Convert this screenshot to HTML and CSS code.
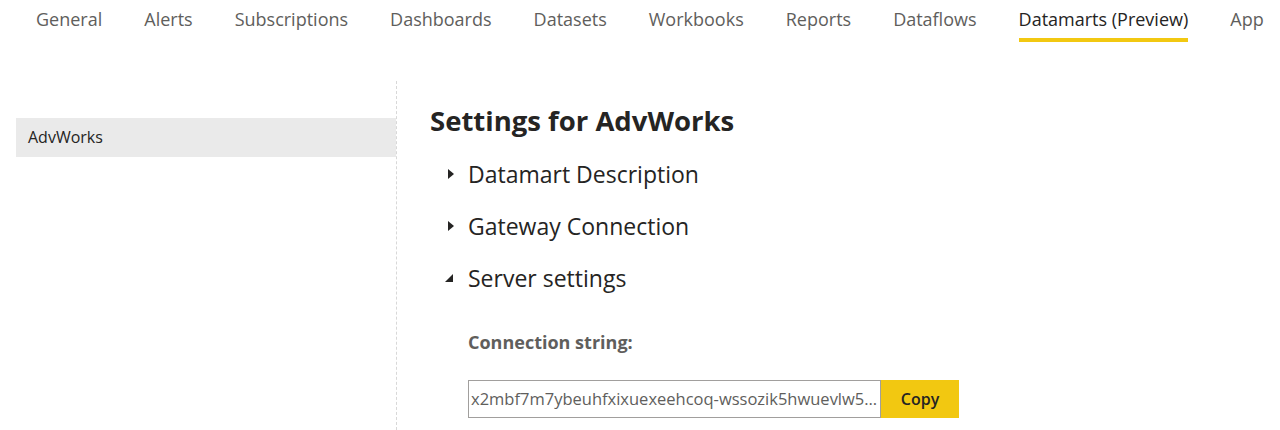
FILE: index.html
```html
<!DOCTYPE html>
<html>
<head>
<meta charset="utf-8">
<link rel="stylesheet" href="styles.css">
</head>
<body>
<nav class="tabs">
  <span class="tab">General</span>
  <span class="tab">Alerts</span>
  <span class="tab">Subscriptions</span>
  <span class="tab">Dashboards</span>
  <span class="tab">Datasets</span>
  <span class="tab">Workbooks</span>
  <span class="tab">Reports</span>
  <span class="tab">Dataflows</span>
  <span class="tab active">Datamarts (Preview)</span>
  <span class="tab">App</span>
</nav>
<div class="main">
  <aside class="sidebar">
    <div class="item selected">AdvWorks</div>
  </aside>
  <section class="content">
    <h1 class="title">Settings for AdvWorks</h1>
    <div class="section"><svg class="caret" viewBox="0 0 8 10" width="8" height="10"><path d="M1 0 L7 5 L1 10 Z" fill="#252423"/></svg><span>Datamart Description</span></div>
    <div class="section"><svg class="caret" viewBox="0 0 8 10" width="8" height="10"><path d="M1 0 L7 5 L1 10 Z" fill="#252423"/></svg><span>Gateway Connection</span></div>
    <div class="section"><svg class="caret down" viewBox="0 0 8 10" width="8" height="10"><path d="M8 1 L8 9 L0 9 Z" fill="#252423"/></svg><span>Server settings</span></div>
    <div class="field">
      <div class="label">Connection string:</div>
      <div class="row">
        <div class="input">x2mbf7m7ybeuhfxixuexeehcoq-wssozik5hwuevlw5ri37tqp3mm.datamart.pbidedicated.windows.net</div>
        <button class="copy">Copy</button>
      </div>
    </div>
  </section>
</div>
</body>
</html>
```

FILE: styles.css
```css
* { box-sizing: border-box; }
html, body { margin: 0; padding: 0; background: #fff; }
body {
  font-family: "Open Sans", "Noto Sans", sans-serif;
  color: #252423;
  width: 1280px;
  height: 430px;
  overflow: hidden;
}
.tabs {
  display: flex;
  gap: 42px;
  padding-left: 36px;
  height: 44px;
  white-space: nowrap;
}
.tab {
  font-size: 18px;
  color: #605e5c;
  padding-top: 7px;
  height: 43px;
}
.tab.active {
  color: #252423;
  border-bottom: 4px solid #f2c811;
  height: 42px;
}
.main {
  display: flex;
  margin-top: 37px;
  height: 349px;
}
.sidebar {
  width: 397px;
  flex: none;
  padding: 37px 0 0 16px;
  border-right: 1px dashed #d8d8d8;
}
.item {
  height: 39px;
  line-height: 39px;
  padding-left: 12px;
  font-size: 16px;
  color: #252423;
}
.item.selected { background: #eaeaea; }
.content {
  padding: 23px 0 0 33px;
}
.title {
  margin: 0;
  font-size: 27.5px;
  font-weight: 700;
  line-height: 34px;
}
.section {
  display: flex;
  align-items: center;
  margin-top: 18px;
  height: 34px;
  font-size: 23px;
  padding-left: 17px;
}
.section:first-of-type { margin-top: 19px; }
.caret { margin-right: 13px; }
.caret.down { margin-left: -2px; margin-right: 15px; }
.field {
  padding-left: 38px;
  margin-top: 36px;
}
.label {
  font-size: 18px;
  font-weight: 700;
  color: #605e5c;
  line-height: 22px;
}
.row {
  display: flex;
  margin-top: 27px;
}
.input {
  width: 413px;
  height: 38px;
  border: 1px solid #a19f9d;
  padding: 0 2px;
  font-size: 16.5px;
  line-height: 36px;
  color: #605e5c;
  white-space: nowrap;
  overflow: hidden;
  text-overflow: ellipsis;
}
.copy {
  width: 78px;
  height: 38px;
  border: none;
  background: #f2c811;
  font-family: inherit;
  font-size: 16px;
  font-weight: 600;
  color: #252423;
  padding: 0;
}
```
